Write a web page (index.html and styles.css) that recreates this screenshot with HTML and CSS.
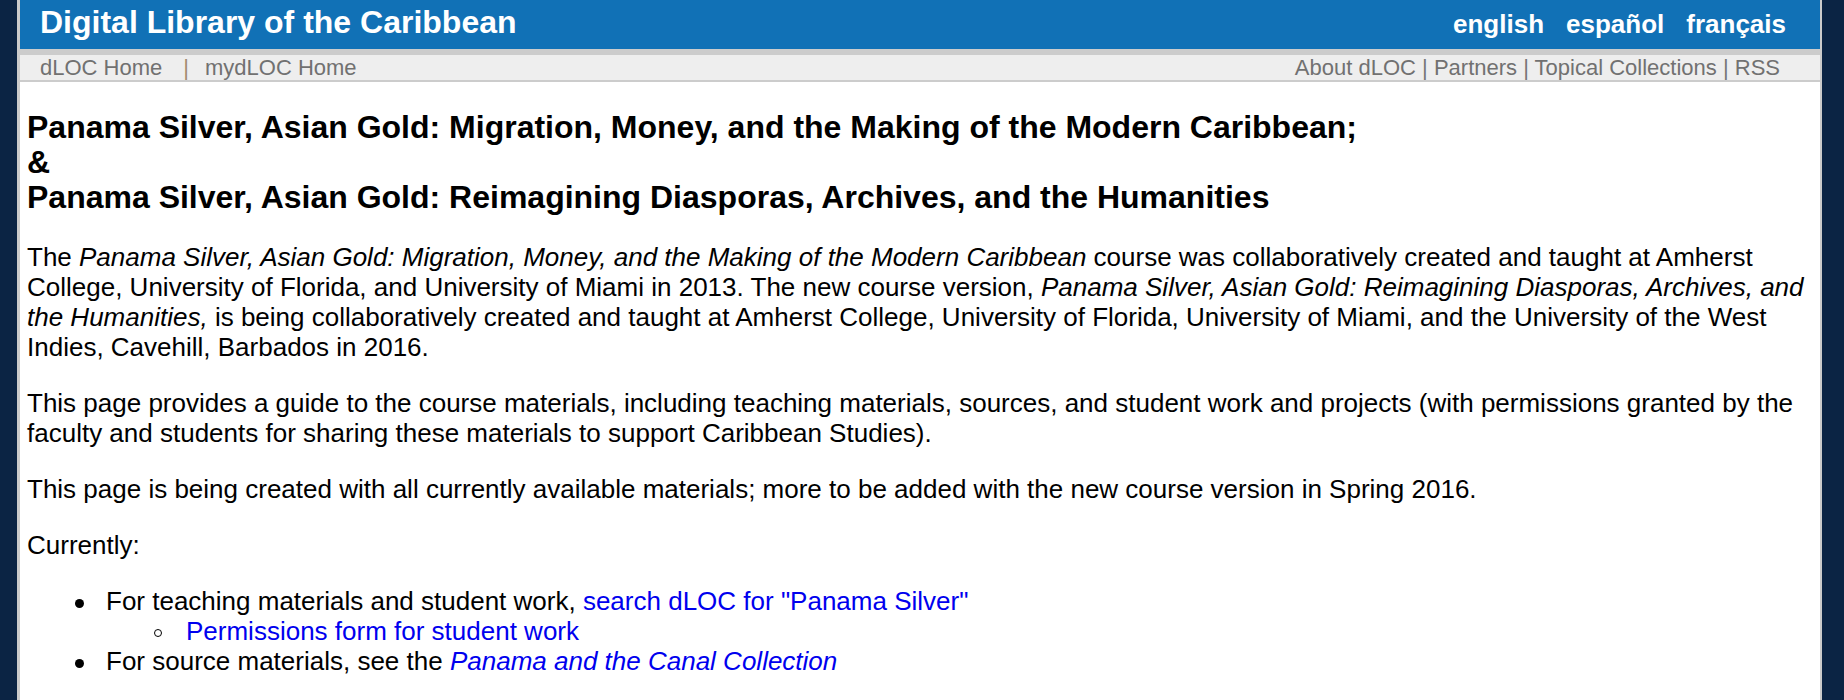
FILE: index.html
```html
<!DOCTYPE html>
<html lang="en">
<head>
<meta charset="utf-8">
<title>Panama Silver, Asian Gold - dLOC</title>
<link rel="stylesheet" href="styles.css">
</head>
<body>
<div class="page">
  <header class="topbar">
    <div class="brand">Digital Library of the Caribbean</div>
    <nav class="langs">
      <a href="#">english</a>
      <a href="#">español</a>
      <a href="#">français</a>
    </nav>
  </header>
  <div class="subnav">
    <div class="subnav-left">
      <a href="#">dLOC Home</a><span class="sep">|</span><a href="#">mydLOC Home</a>
    </div>
    <div class="subnav-right">
      <a href="#">About dLOC</a> | <a href="#">Partners</a> | <a href="#">Topical Collections</a> | <a href="#">RSS</a>
    </div>
  </div>
  <main class="content">
    <h1 class="title">Panama Silver, Asian Gold: Migration, Money, and the Making of the Modern Caribbean;<br>&amp;<br>Panama Silver, Asian Gold: Reimagining Diasporas, Archives, and the Humanities</h1>
    <p>The <em>Panama Silver, Asian Gold: Migration, Money, and the Making of the Modern Caribbean</em> course was collaboratively created and taught at Amherst College, University of Florida, and University of Miami in 2013. The new course version, <em>Panama Silver, Asian Gold: Reimagining Diasporas, Archives, and the Humanities,</em> is being collaboratively created and taught at Amherst College, University of Florida, University of Miami, and the University of the West Indies, Cavehill, Barbados in 2016.</p>
    <p>This page provides a guide to the course materials, including teaching materials, sources, and student work and projects (with permissions granted by the faculty and students for sharing these materials to support Caribbean Studies).</p>
    <p>This page is being created with all currently available materials; more to be added with the new course version in Spring 2016.</p>
    <p>Currently:</p>
    <ul class="list">
      <li>For teaching materials and student work, <a href="#">search dLOC for "Panama Silver"</a>
        <ul class="sublist">
          <li><a href="#">Permissions form for student work</a></li>
        </ul>
      </li>
      <li>For source materials, see the <a href="#"><em>Panama and the Canal Collection</em></a></li>
    </ul>
  </main>
</div>
</body>
</html>
```
FILE: styles.css
```css
html, body {
  margin: 0;
  padding: 0;
}

body {
  background: #0b2444;
  font-family: "Liberation Sans", Arial, Helvetica, sans-serif;
  color: #000;
  min-height: 700px;
}

.page {
  margin-left: 17px;
  width: 1800px;
  min-height: 700px;
  background: #fff;
  border-left: 3px solid #cbcbcb;
  border-right: 2px solid #cbcbcb;
}

.topbar {
  box-sizing: border-box;
  height: 49px;
  background: #1171b6;
  display: flex;
  align-items: baseline;
  justify-content: space-between;
  padding: 6px 34px 0 20px;
}

.brand {
  color: #fff;
  font-weight: bold;
  font-size: 32px;
  line-height: 1;
}

.langs {
  display: flex;
  gap: 22px;
}

.langs a {
  color: #fff;
  font-weight: bold;
  font-size: 26px;
  text-decoration: none;
}

.subnav {
  display: flex;
  justify-content: space-between;
  height: 25px;
  line-height: 25px;
  background: #eeeeee;
  border-top: 6px solid #cccccc;
  border-bottom: 2px solid #cccccc;
  padding: 0 40px 0 20px;
  font-size: 22px;
  color: #777777;
}

.subnav a {
  color: #717171;
  text-decoration: none;
}

.subnav .sep {
  color: #a48c70;
  padding: 0 16px 0 21px;
}

.content {
  padding: 0 16px 20px 7px;
}

.title {
  font-size: 32px;
  line-height: 35px;
  font-weight: bold;
  margin: 28px 0 27px;
}

.content p {
  font-size: 26px;
  line-height: 30px;
  margin: 26px 0;
}

.content a {
  color: #0000ee;
  text-decoration: none;
}

.list {
  list-style: none;
  margin: 26px 0 0;
  padding-left: 79px;
  font-size: 26px;
  line-height: 30px;
}

.list li::before {
  content: "";
  display: inline-block;
  box-sizing: border-box;
  width: 9px;
  height: 9px;
  border-radius: 50%;
  background: #000;
  margin-left: -31px;
  margin-right: 22px;
  vertical-align: middle;
}

.sublist {
  list-style: none;
  margin: 0;
  padding-left: 80px;
}

.list .sublist li::before {
  width: 8px;
  height: 8px;
  background: transparent;
  border: 1.5px solid #000;
  margin-left: -32px;
  margin-right: 24px;
}
```
